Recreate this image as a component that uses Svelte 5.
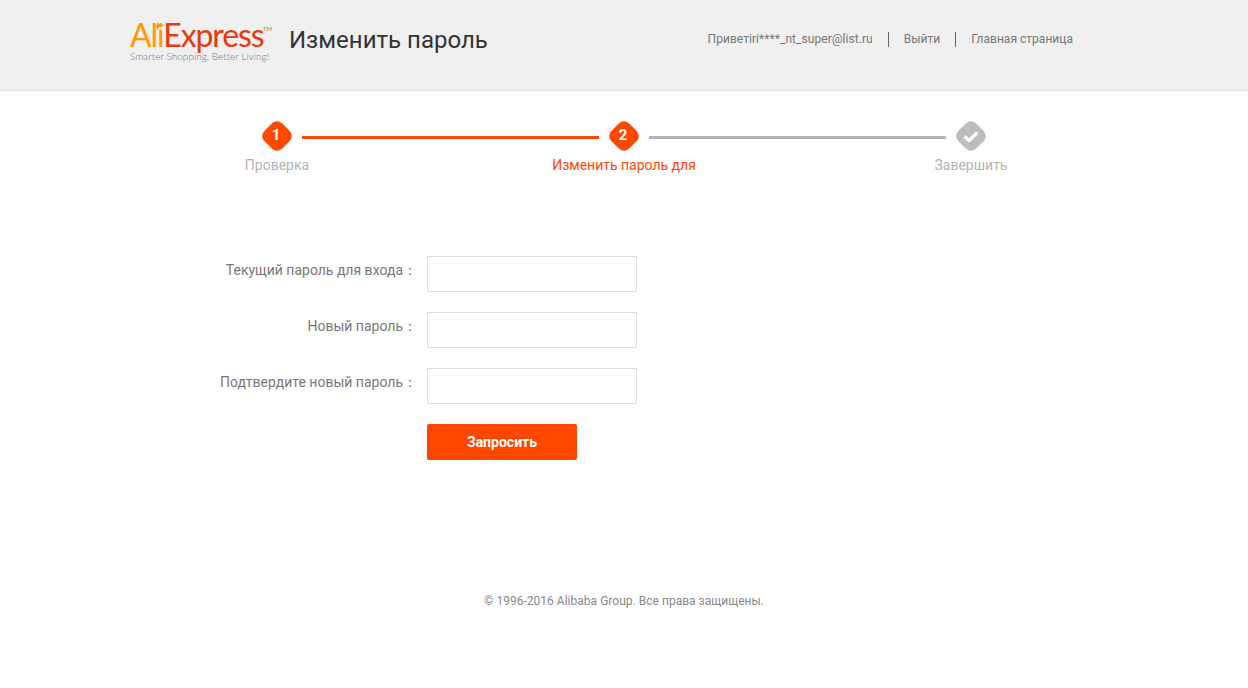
<script>
  const fields = ['Текущий пароль для входа', 'Новый пароль', 'Подтвердите новый пароль'];
</script>

<header class="top">
  <div class="logo">
    <div class="brand">
      <span class="ali">Ali</span><span class="express">Express</span><span class="tm">TM</span>
      <svg class="star" viewBox="0 0 8 10" width="8" height="10"><path d="M4 0 L5 4 L8 5 L5 6 L4 10 L3 6 L0 5 L3 4 Z" fill="#ff9a00" /></svg>
    </div>
    <div class="tagline">Smarter Shopping, Better Living!</div>
  </div>
  <h1>Изменить пароль</h1>
  <nav>
    <span class="hello">Приветiri****_nt_super@list.ru</span>
    <a href="#out">Выйти</a>
    <a href="#home">Главная страница</a>
  </nav>
</header>

<div class="steps">
  <div class="step done">
    <svg viewBox="0 0 30 30" width="30" height="30"><rect x="2.5" y="2.5" width="25" height="25" rx="7" transform="rotate(45 15 15)" /></svg>
    <b>1</b>
    <span class="label">Проверка</span>
  </div>
  <div class="line on"></div>
  <div class="step current">
    <svg viewBox="0 0 30 30" width="30" height="30"><rect x="2.5" y="2.5" width="25" height="25" rx="7" transform="rotate(45 15 15)" /></svg>
    <b>2</b>
    <span class="label">Изменить пароль для</span>
  </div>
  <div class="line"></div>
  <div class="step last">
    <svg viewBox="0 0 30 30" width="30" height="30">
      <rect x="2.5" y="2.5" width="25" height="25" rx="7" transform="rotate(45 15 15)" />
      <path d="M8.5 15.5 L13 19.5 L21.5 11.5" fill="none" stroke="#fff" stroke-width="3.2" />
    </svg>
    <span class="label">Завершить</span>
  </div>
</div>

<form on:submit|preventDefault>
  {#each fields as f}
    <div class="row">
      <label for={f}>{f}：</label>
      <input id={f} type="password" />
    </div>
  {/each}
  <div class="row">
    <span class="spacer"></span>
    <button type="submit">Запросить</button>
  </div>
</form>

<footer>© 1996-2016 Alibaba Group. Все права защищены.</footer>

<style>
  :global(body) {
    font-family: Roboto, 'Noto Sans', sans-serif;
    background: #fff;
    color: #666;
  }

  .top {
    display: flex;
    align-items: flex-start;
    box-sizing: border-box;
    height: 91px;
    padding: 0 175px 0 130px;
    background: #f0f0f0;
    border-bottom: 1px solid #e2e2e2;
  }

  .logo {
    width: 159px;
    padding-top: 18px;
  }

  .brand {
    position: relative;
    height: 33px;
    font-family: Lato, sans-serif;
    font-size: 32px;
    font-weight: 400;
    line-height: 33px;
    letter-spacing: -1.1px;
    white-space: nowrap;
  }

  .ali {
    color: #ff9a00;
  }

  .express {
    color: #e8380d;
  }

  .tm {
    position: absolute;
    left: 133px;
    top: 8px;
    font-size: 6px;
    line-height: 6px;
    letter-spacing: 0;
    color: #e8663f;
  }

  .star {
    position: absolute;
    left: 24px;
    top: 3px;
  }

  .tagline {
    font-family: Lato, sans-serif;
    font-size: 10px;
    font-weight: 300;
    line-height: 12px;
    margin-top: -1px;
    color: #777;
    letter-spacing: 0.02px;
    white-space: nowrap;
  }

  h1 {
    margin: 24px 0 0;
    font-size: 24px;
    line-height: 32px;
    font-weight: 400;
    color: #333;
    white-space: nowrap;
  }

  nav {
    display: flex;
    align-items: center;
    margin: 32px 0 0 auto;
    font-size: 12px;
    line-height: 15px;
    color: #777;
    letter-spacing: 0.02px;
    white-space: nowrap;
  }

  .hello {
    letter-spacing: 0.05px;
  }

  nav a {
    margin-left: 15px;
    padding-left: 15px;
    border-left: 1px solid #666;
    color: #777;
    text-decoration: none;
  }

  .steps {
    display: flex;
    align-items: flex-start;
    margin: 30px 0 0 262px;
    width: 724px;
    height: 135px;
  }

  .step {
    position: relative;
    display: flex;
    flex-direction: column;
    align-items: center;
    width: 30px;
    flex: none;
  }

  .step svg {
    display: block;
    fill: #ff4700;
  }

  .step b {
    position: absolute;
    top: 0;
    left: -1px;
    width: 30px;
    text-align: center;
    font-size: 15px;
    line-height: 29px;
    color: #fff;
  }

  .step.last svg {
    fill: #bdbdbd;
  }

  .label {
    margin-top: 5px;
    font-size: 14px;
    line-height: 18px;
    color: #b3b3b3;
    white-space: nowrap;
  }

  .current .label {
    color: #ff4700;
  }

  .line {
    flex: 1;
    height: 3px;
    margin: 15px 10px 0;
    background: #b5b5b5;
  }

  .line.on {
    background: #ff4700;
  }

  form {
    display: flex;
    flex-direction: column;
    gap: 20px;
  }

  .row {
    display: flex;
    gap: 0;
    height: 36px;
  }

  label,
  .spacer {
    width: 417px;
    margin-right: 10px;
    text-align: right;
    font-size: 14px;
    line-height: 28px;
    color: #777;
    white-space: nowrap;
  }

  input {
    box-sizing: border-box;
    width: 210px;
    height: 36px;
    padding: 0 8px;
    border: 1px solid #dcdcdc;
    background: #fff;
    outline: none;
  }

  button {
    width: 150px;
    height: 36px;
    border: 0;
    border-radius: 2px;
    background: #ff4700;
    color: #fff;
    font-family: inherit;
    font-size: 14px;
    font-weight: 700;
  }

  footer {
    margin-top: 134px;
    text-align: center;
    font-size: 12px;
    line-height: 15px;
    letter-spacing: 0.02px;
    color: #888;
  }
</style>
